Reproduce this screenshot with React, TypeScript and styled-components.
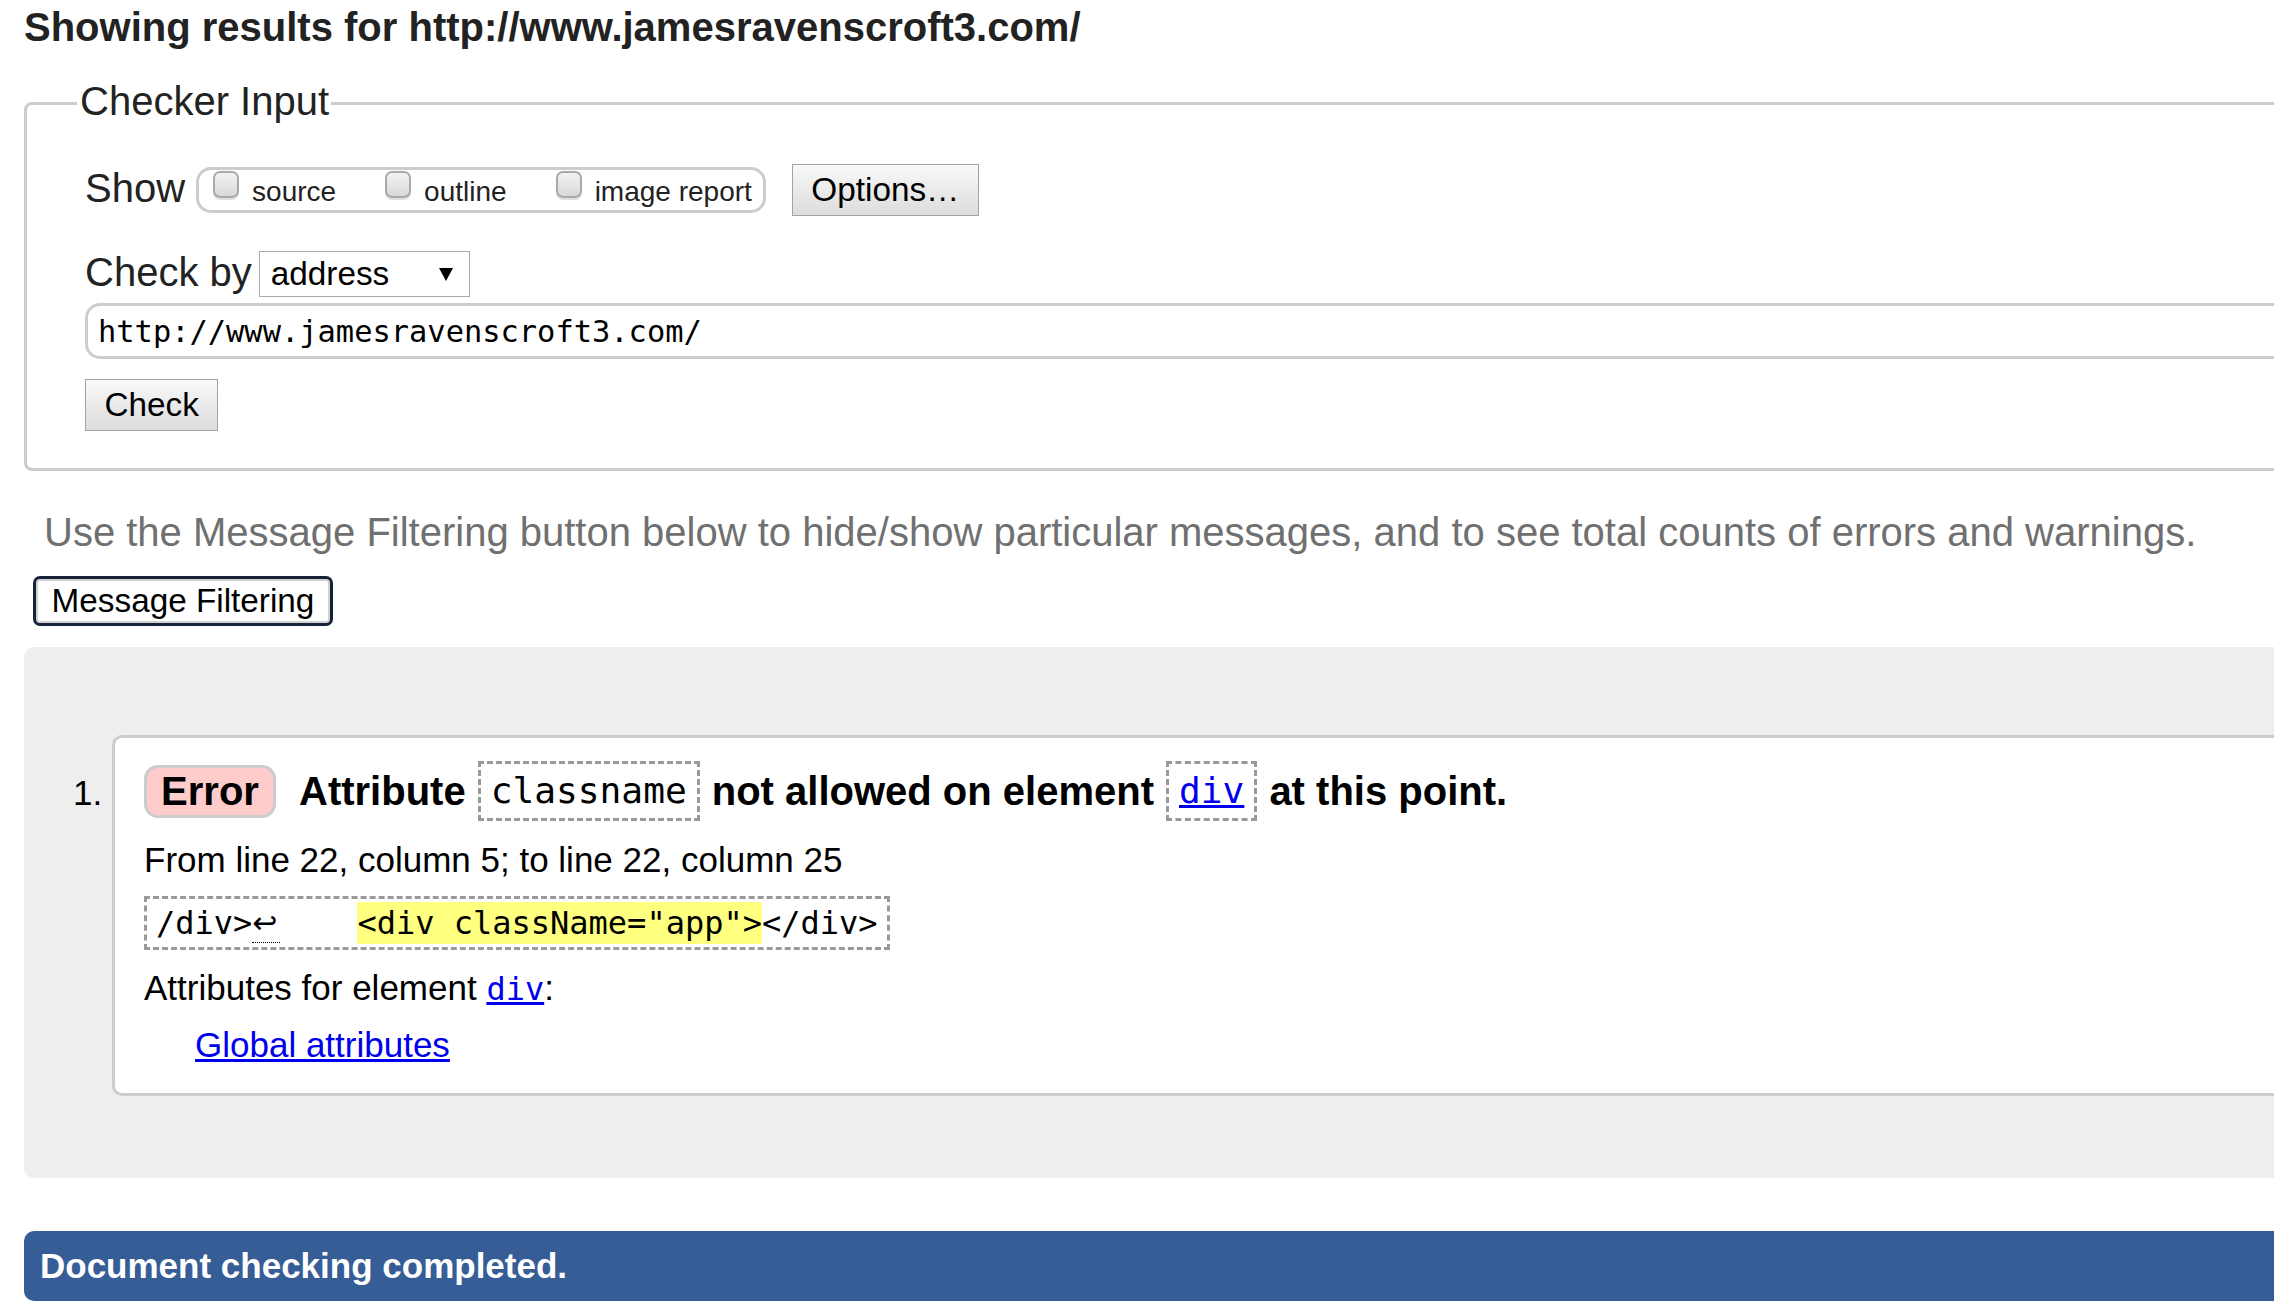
import React from "react";
import styled, { createGlobalStyle } from "styled-components";

const GlobalStyle = createGlobalStyle`
  html, body {
    margin: 0;
    padding: 0;
    overflow: hidden;
    background: #fff;
  }
  body {
    font-family: "Liberation Sans", Arial, sans-serif;
    color: #222;
  }
`;

const SANS = `"Liberation Sans", Arial, sans-serif`;
const MONO = `"DejaVu Sans Mono", "Liberation Mono", monospace`;

const Page = styled.main`
  width: 2500px;
  box-sizing: border-box;
  padding: 4px 0 0 24px;
`;

const Heading = styled.h2`
  margin: 0;
  font-size: 40px;
  line-height: 46px;
  font-weight: bold;
  color: #222;
`;

const InputFieldset = styled.fieldset`
  margin: 28px 0 0;
  padding: 0 0 37px 58px;
  border: 3px solid #ccc;
  border-radius: 8px;
  min-width: 0;
`;

const Legend = styled.legend`
  margin-left: -8px;
  padding: 0 2px 4px 3px;
  font-size: 40px;
  line-height: 46px;
  color: #222;
`;

const Row = styled.div<{ $top: number }>`
  display: flex;
  align-items: center;
  margin-top: ${(p) => p.$top}px;
`;

const FieldLabel = styled.span`
  font-size: 40px;
  line-height: 40px;
  padding-bottom: 4px;
  color: #222;
`;

const OptionGroup = styled.div`
  display: flex;
  align-items: flex-start;
  gap: 49px;
  height: 46px;
  box-sizing: border-box;
  margin-left: 11px;
  padding: 1px 11px 0 14px;
  border: 3px solid #ccc;
  border-radius: 15px;
`;

const OptionLabel = styled.label`
  display: flex;
  align-items: flex-start;
  gap: 13px;
  font-size: 28px;
  line-height: 32px;
  color: #222;
`;

const OptionText = styled.span`
  margin-top: 5px;
`;

const Checkbox = styled.input.attrs({ type: "checkbox" })`
  appearance: none;
  margin: 0;
  width: 26px;
  height: 27px;
  box-sizing: border-box;
  border: 2px solid #a9a9a9;
  border-radius: 7px;
  background: linear-gradient(#f3f3f3, #d8d8d8);
  box-shadow: 0 2px 0 rgba(0, 0, 0, 0.12);
`;

const GrayButton = styled.button<{ $left?: number; $top?: number }>`
  display: block;
  height: 52px;
  margin: ${(p) => p.$top ?? 0}px 0 0 ${(p) => p.$left ?? 0}px;
  padding: 0 18.5px;
  border: 1px solid #a3a3a3;
  border-radius: 0;
  background: linear-gradient(#f9f9f9, #dcdcdc);
  font-family: ${SANS};
  font-size: 33.3px;
  line-height: 38px;
  color: #000;
`;

const SelectBox = styled.div`
  display: flex;
  align-items: center;
  justify-content: space-between;
  width: 211px;
  height: 46px;
  box-sizing: border-box;
  margin-left: 7px;
  padding: 0 16px 0 11px;
  border: 1px solid #aaa;
  background: #fff;
  font-size: 33.3px;
  line-height: 38px;
  color: #000;
`;

const UrlInput = styled.input`
  display: block;
  width: 100%;
  height: 56px;
  box-sizing: border-box;
  margin-top: 6px;
  padding: 0 10px;
  border: 3px solid #ccc;
  border-radius: 15px;
  background: #fff;
  outline: none;
  font-family: ${MONO};
  font-size: 30.4px;
  color: #000;
`;

const Hint = styled.p`
  margin: 38px 0 0 20px;
  font-size: 40px;
  line-height: 46px;
  color: #707070;
  white-space: nowrap;
`;

const FilterButton = styled.button`
  display: block;
  width: 300px;
  height: 50px;
  box-sizing: border-box;
  margin: 21px 0 0 9px;
  padding: 0;
  border: 3px solid #17233b;
  border-radius: 7px;
  box-shadow: inset 0 0 0 2px #d2d2d2;
  background: #fff;
  font-family: ${SANS};
  font-size: 33.3px;
  color: #000;
`;

const Messages = styled.ol`
  margin: 21px 0 0;
  padding: 88px 0 82px 88px;
  background: #eee;
  border-radius: 10px;
  list-style: decimal outside;
`;

const MessageItem = styled.li`
  background: #fff;
  border: 3px solid #ccc;
  border-radius: 10px;
  padding: 23px 0 28px 29px;
  font-size: 35px;
  line-height: 40px;
  color: #000;
`;

const MessageHeader = styled.p`
  display: flex;
  align-items: center;
  gap: 12px;
  margin: 0;
  font-size: 40px;
  line-height: 46px;
  font-weight: bold;
  white-space: nowrap;
`;

const Badge = styled.strong`
  display: flex;
  align-items: center;
  justify-content: center;
  width: 132px;
  height: 53px;
  box-sizing: border-box;
  margin-right: 11px;
  border: 3px solid #ccc;
  border-radius: 14px;
  background: #fcc;
`;

const CodeBox = styled.code`
  display: flex;
  align-items: center;
  height: 60px;
  box-sizing: border-box;
  padding: 0 10px;
  border: 3px dashed #999;
  font-family: ${MONO};
  font-size: 36.2px;
  font-weight: normal;
`;

const Link = styled.a`
  color: #00e;
  text-decoration: underline;
`;

const MonoLink = styled(Link)`
  font-family: ${MONO};
  line-height: 1;
`;

const InlineMonoLink = styled(MonoLink)`
  font-size: 32px;
`;

const Detail = styled.p<{ $top: number }>`
  margin: ${(p) => p.$top}px 0 0;
`;

const Extract = styled.p`
  width: fit-content;
  margin: 16px 0 0;
  padding: 4px 9px;
  border: 3px dashed #999;
  font-family: ${MONO};
  font-size: 32px;
  line-height: 40px;
  white-space: pre;
`;

const ReturnMark = styled.span`
  display: inline-block;
  width: 28px;
  height: 39px;
  vertical-align: top;
  border-bottom: 1px dotted #000;
  font-family: "DejaVu Sans", sans-serif;
  font-size: 30px;
  line-height: 40px;
`;

const Highlight = styled.mark`
  background: #ffff80;
  color: #000;
  padding: 2px 0;
`;

const AttrList = styled.ul`
  list-style: none;
  margin: 17px 0 0;
  padding: 0 0 0 51px;
`;

const Completion = styled.p`
  margin: 53px 0 0;
  padding: 15px 16px;
  border-radius: 10px;
  background: #365d95;
  color: #fff;
  font-size: 35px;
  line-height: 40px;
  font-weight: bold;
`;

const Arrow = () => (
  <svg width="14" height="14" viewBox="0 0 14 14" aria-hidden="true">
    <polygon points="0,1 14,1 7,14" fill="#000" />
  </svg>
);

export default function App() {
  return (
    <>
      <GlobalStyle />
      <Page>
        <Heading>Showing results for http://www.jamesravenscroft3.com/</Heading>

        <InputFieldset>
          <Legend>Checker Input</Legend>
          <Row $top={36}>
            <FieldLabel>Show</FieldLabel>
            <OptionGroup role="group">
              <OptionLabel>
                <Checkbox />
                <OptionText>source</OptionText>
              </OptionLabel>
              <OptionLabel>
                <Checkbox />
                <OptionText>outline</OptionText>
              </OptionLabel>
              <OptionLabel>
                <Checkbox />
                <OptionText>image report</OptionText>
              </OptionLabel>
            </OptionGroup>
            <GrayButton $left={26}>Options…</GrayButton>
          </Row>
          <Row $top={35}>
            <FieldLabel>Check by</FieldLabel>
            <SelectBox>
              <span>address</span>
              <Arrow />
            </SelectBox>
          </Row>
          <UrlInput readOnly value="http://www.jamesravenscroft3.com/" />
          <GrayButton $top={20}>Check</GrayButton>
        </InputFieldset>

        <Hint>
          Use the Message Filtering button below to hide/show particular messages, and to see total counts of errors and
          warnings.
        </Hint>
        <FilterButton>Message Filtering</FilterButton>

        <Messages>
          <MessageItem>
            <MessageHeader>
              <Badge>Error</Badge>
              <span>Attribute</span>
              <CodeBox>classname</CodeBox>
              <span>not allowed on element</span>
              <CodeBox>
                <MonoLink href="#div">div</MonoLink>
              </CodeBox>
              <span>at this point.</span>
            </MessageHeader>
            <Detail $top={19}>From line 22, column 5; to line 22, column 25</Detail>
            <Extract>
              {"/div>"}
              <ReturnMark title="line break">↩</ReturnMark>
              {"    "}
              <Highlight>{'<div className="app">'}</Highlight>
              {"</div>"}
            </Extract>
            <Detail $top={18}>
              Attributes for element <InlineMonoLink href="#div">div</InlineMonoLink>:
            </Detail>
            <AttrList>
              <li>
                <Link href="#global">Global attributes</Link>
              </li>
            </AttrList>
          </MessageItem>
        </Messages>

        <Completion>Document checking completed.</Completion>
      </Page>
    </>
  );
}
